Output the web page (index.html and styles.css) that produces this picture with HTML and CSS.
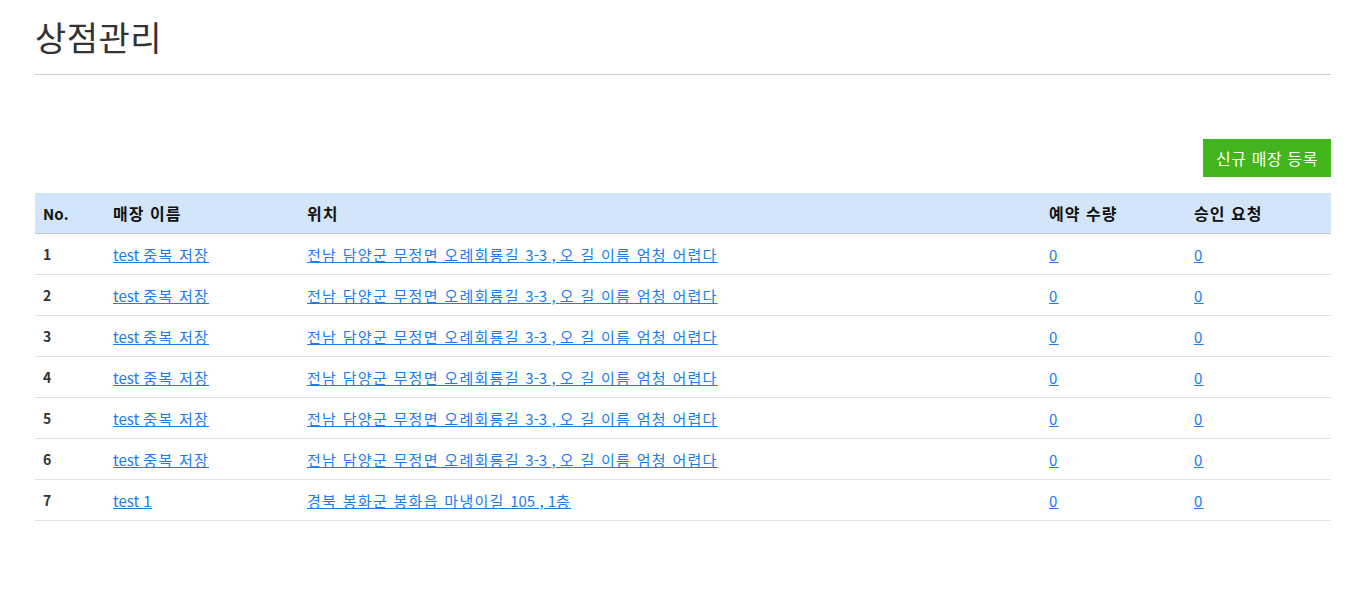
FILE: index.html
```html
<!DOCTYPE html>
<html lang="ko">
<head>
<meta charset="utf-8">
<link rel="stylesheet" href="styles.css">
</head>
<body>
<div class="page">
  <h1 class="title">상점관리</h1>
  <hr class="divider">
  <div class="actions">
    <button class="btn-new">신규 매장 등록</button>
  </div>
  <table class="stores">
    <colgroup>
      <col class="c-no"><col class="c-name"><col class="c-loc"><col class="c-res"><col class="c-req">
    </colgroup>
    <thead>
      <tr><th><span class="en">No.</span></th><th>매장 이름</th><th>위치</th><th>예약 수량</th><th>승인 요청</th></tr>
    </thead>
    <tbody>
      <tr><td class="num">1</td><td><a href="#"><span class="en">test </span>중복 저장</a></td><td><a href="#">전남 담양군 무정면 오례회룡길 <span class="en">3-3 , </span>오 길 이름 엄청 어렵다</a></td><td><a href="#">0</a></td><td><a href="#">0</a></td></tr>
      <tr><td class="num">2</td><td><a href="#"><span class="en">test </span>중복 저장</a></td><td><a href="#">전남 담양군 무정면 오례회룡길 <span class="en">3-3 , </span>오 길 이름 엄청 어렵다</a></td><td><a href="#">0</a></td><td><a href="#">0</a></td></tr>
      <tr><td class="num">3</td><td><a href="#"><span class="en">test </span>중복 저장</a></td><td><a href="#">전남 담양군 무정면 오례회룡길 <span class="en">3-3 , </span>오 길 이름 엄청 어렵다</a></td><td><a href="#">0</a></td><td><a href="#">0</a></td></tr>
      <tr><td class="num">4</td><td><a href="#"><span class="en">test </span>중복 저장</a></td><td><a href="#">전남 담양군 무정면 오례회룡길 <span class="en">3-3 , </span>오 길 이름 엄청 어렵다</a></td><td><a href="#">0</a></td><td><a href="#">0</a></td></tr>
      <tr><td class="num">5</td><td><a href="#"><span class="en">test </span>중복 저장</a></td><td><a href="#">전남 담양군 무정면 오례회룡길 <span class="en">3-3 , </span>오 길 이름 엄청 어렵다</a></td><td><a href="#">0</a></td><td><a href="#">0</a></td></tr>
      <tr><td class="num">6</td><td><a href="#"><span class="en">test </span>중복 저장</a></td><td><a href="#">전남 담양군 무정면 오례회룡길 <span class="en">3-3 , </span>오 길 이름 엄청 어렵다</a></td><td><a href="#">0</a></td><td><a href="#">0</a></td></tr>
      <tr><td class="num">7</td><td><a href="#"><span class="en">test 1</span></a></td><td><a href="#">경북 봉화군 봉화읍 마냉이길 <span class="en">105 , 1</span>층</a></td><td><a href="#">0</a></td><td><a href="#">0</a></td></tr>
    </tbody>
  </table>
</div>
</body>
</html>
```

FILE: styles.css
```css
html, body {
  margin: 0;
  padding: 0;
  background: #fff;
}
body {
  font-family: "Noto Sans CJK KR", "Noto Sans", sans-serif;
  color: #212529;
}
.page {
  padding: 0 24px 0 35px;
}
.title {
  margin: 0;
  padding-top: 14px;
  font-size: 34px;
  font-weight: 400;
  line-height: 46px;
  color: #333;
  letter-spacing: 0.5px;
}
.divider {
  margin: 14px 0 0 0;
  border: 0;
  border-top: 1px solid #ccc;
  height: 0;
}
.actions {
  display: flex;
  justify-content: flex-end;
  margin-top: 64px;
}
.btn-new {
  font-family: inherit;
  font-size: 16px;
  letter-spacing: 0.6px;
  color: #fff;
  background: #41b51b;
  border: 0;
  border-radius: 0;
  height: 38px;
  padding: 0 13px;
  line-height: 38px;
}
.stores {
  width: 100%;
  border-collapse: collapse;
  margin-top: 16px;
  font-size: 15px;
  letter-spacing: 1.3px;
  table-layout: fixed;
}
.stores .en {
  letter-spacing: 0;
}
.c-no { width: 70px; }
.c-name { width: 194px; }
.c-loc { width: 742px; }
.c-res { width: 145px; }
.c-req { width: 145px; }
.stores th {
  background: #d3e5f8;
  text-align: left;
  font-weight: 700;
  font-size: 16px;
  letter-spacing: 1px;
  color: #111;
  height: 40px;
  padding: 0 8px;
  border-bottom: 1px solid #b9cadb;
  vertical-align: middle;
}
.stores th .en {
  font-size: 15px;
}
.stores td {
  height: 40px;
  padding: 0 8px;
  border-bottom: 1px solid #dee2e6;
  vertical-align: middle;
}
.stores td.num {
  font-weight: 700;
  color: #333;
  font-size: 14px;
  letter-spacing: 0;
}
.stores a {
  color: #1a7cf0;
  text-decoration: underline;
}
```
